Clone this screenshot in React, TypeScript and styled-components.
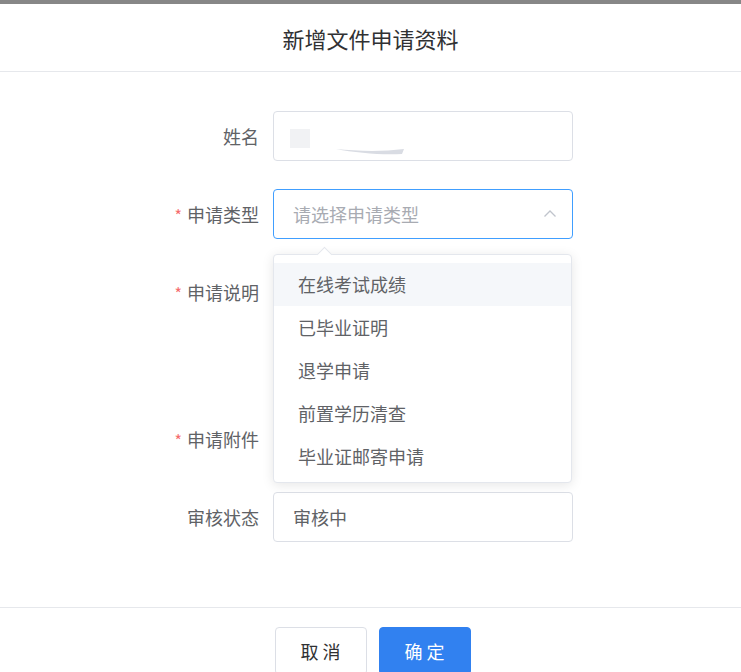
import React, { useState } from 'react';
import styled, { createGlobalStyle } from 'styled-components';

const GlobalStyle = createGlobalStyle`
  html, body {
    margin: 0;
    padding: 0;
    background: #ffffff;
  }
  body {
    font-family: 'Noto Sans CJK SC', 'Liberation Sans', sans-serif;
  }
`;

const TYPES = ['在线考试成绩', '已毕业证明', '退学申请', '前置学历清查', '毕业证邮寄申请'];

const App = () => {
  const [hovered, setHovered] = useState<number>(0);
  return (
    <>
      <GlobalStyle />
      <Dialog>
        <Header>新增文件申请资料</Header>
        <Body>
          <FormItem>
            <Label>姓名</Label>
            <Field>
              <Input>
                <Redacted>
                  <Block />
                  <svg width="70" height="8" viewBox="0 0 70 8">
                    <path d="M0 1 C 20 3, 45 4, 68 1 L 66 6 C 45 7, 20 5, 0 1 Z" fill="#d9dce3" />
                  </svg>
                </Redacted>
              </Input>
            </Field>
          </FormItem>
          <FormItem>
            <Label required>申请类型</Label>
            <Field>
              <Input focused>
                <Placeholder>请选择申请类型</Placeholder>
                <svg width="14" height="14" viewBox="0 0 14 14">
                  <path d="M1.5 9.5 L7 4 L12.5 9.5" fill="none" stroke="#c0c4cc" strokeWidth="1.3" />
                </svg>
              </Input>
              <Dropdown>
                <Arrow />
                {TYPES.map((t, i) => (
                  <Option key={t} active={hovered === i} onMouseEnter={() => setHovered(i)}>
                    {t}
                  </Option>
                ))}
              </Dropdown>
            </Field>
          </FormItem>
          <FormItem height={119}>
            <Label required>申请说明</Label>
            <Field />
          </FormItem>
          <FormItem>
            <Label required>申请附件</Label>
            <Field />
          </FormItem>
          <FormItem>
            <Label>审核状态</Label>
            <Field>
              <Input>
                <Value>审核中</Value>
              </Input>
            </Field>
          </FormItem>
        </Body>
        <Footer>
          <Button>取 消</Button>
          <Button primary>确 定</Button>
        </Footer>
      </Dialog>
    </>
  );
};

export default App;

const Dialog = styled.div`
  width: 741px;
  height: 672px;
  overflow: hidden;
  border-top: 4px solid #878787;
  box-sizing: border-box;
  background: #ffffff;
`;
const Header = styled.div`
  height: 67px;
  display: flex;
  align-items: center;
  justify-content: center;
  font-size: 22px;
  color: #303133;
  border-bottom: 1px solid #e6e8ec;
`;
const Body = styled.div`
  padding: 39px 0 37px;
`;
const FormItem = styled.div<{ height?: number }>`
  display: flex;
  height: ${(p) => p.height || 50}px;
  margin-bottom: 28px;
`;
const Label = styled.div<{ required?: boolean }>`
  width: 273px;
  padding-right: 14px;
  box-sizing: border-box;
  text-align: right;
  line-height: 50px;
  font-size: 18px;
  color: #606266;
  &::before {
    content: ${(p) => (p.required ? "'*'" : "''")};
    color: #f56c6c;
    margin-right: 5px;
    font-size: 16px;
  }
`;
const Field = styled.div`
  position: relative;
  width: 300px;
`;
const Input = styled.div<{ focused?: boolean }>`
  height: 50px;
  box-sizing: border-box;
  border: 1px solid ${(p) => (p.focused ? '#409eff' : '#dcdfe6')};
  border-radius: 4px;
  padding: 0 15px 0 19px;
  display: flex;
  align-items: center;
  justify-content: space-between;
  font-size: 18px;
`;
const Placeholder = styled.span`
  color: #a8abb2;
`;
const Value = styled.span`
  color: #606266;
`;
const Redacted = styled.div`
  display: flex;
  align-items: flex-end;
  gap: 26px;
  height: 27px;
  margin: 12px 0 0 -3px;
`;
const Block = styled.div`
  width: 20px;
  height: 19px;
  background: #f1f2f4;
  align-self: flex-start;
`;
const Dropdown = styled.div`
  position: absolute;
  left: 0;
  top: 65px;
  width: 299px;
  box-sizing: border-box;
  border: 1px solid #e4e7ed;
  border-radius: 4px;
  background: #ffffff;
  box-shadow: 0 2px 12px rgba(0, 0, 0, 0.1);
  padding: 8px 0 4px;
  z-index: 10;
`;
const Arrow = styled.div`
  position: absolute;
  top: -6px;
  left: 45px;
  width: 10px;
  height: 10px;
  background: #ffffff;
  border-top: 1px solid #e4e7ed;
  border-left: 1px solid #e4e7ed;
  transform: rotate(45deg);
`;
const Option = styled.div<{ active?: boolean }>`
  position: relative;
  height: 43px;
  line-height: 42px;
  padding: 0 24px;
  font-size: 18px;
  color: #606266;
  background: ${(p) => (p.active ? '#f5f7fa' : '#ffffff')};
  cursor: pointer;
`;
const Footer = styled.div`
  border-top: 1px solid #e6e8ec;
  padding-top: 19px;
  display: flex;
  justify-content: center;
  gap: 12px;
  padding-left: 4px;
`;
const Button = styled.div<{ primary?: boolean }>`
  width: 92px;
  height: 48px;
  box-sizing: border-box;
  border-radius: 4px;
  border: 1px solid ${(p) => (p.primary ? '#3181f0' : '#dcdfe6')};
  background: ${(p) => (p.primary ? '#3181f0' : '#ffffff')};
  color: ${(p) => (p.primary ? '#ffffff' : '#303133')};
  font-size: 18px;
  display: flex;
  align-items: center;
  justify-content: center;
  cursor: pointer;
`;
